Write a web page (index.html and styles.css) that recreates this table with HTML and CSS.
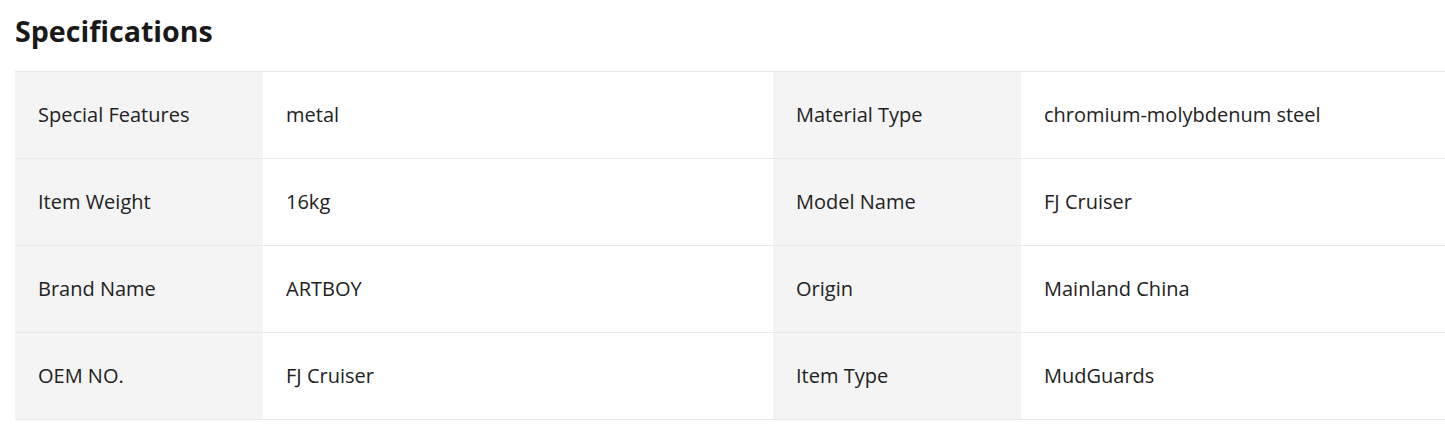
FILE: index.html
```html
<!DOCTYPE html>
<html lang="en">
<head>
    <meta charset="UTF-8">
    <meta name="viewport" content="width=device-width, initial-scale=1.0">
    <title>Specifications</title>
    <link rel="stylesheet" href="styles.css">
</head>
<body>
    <div class="specs">
        <h2 class="specs-title">Specifications</h2>
        <table class="specs-table">
            <colgroup>
                <col class="col-label">
                <col class="col-value">
                <col class="col-label">
                <col class="col-value-last">
            </colgroup>
            <tr>
                <td class="label">Special Features</td>
                <td>metal</td>
                <td class="label">Material Type</td>
                <td>chromium-molybdenum steel</td>
            </tr>
            <tr>
                <td class="label">Item Weight</td>
                <td>16kg</td>
                <td class="label">Model Name</td>
                <td>FJ Cruiser</td>
            </tr>
            <tr>
                <td class="label">Brand Name</td>
                <td>ARTBOY</td>
                <td class="label">Origin</td>
                <td>Mainland China</td>
            </tr>
            <tr>
                <td class="label">OEM NO.</td>
                <td>FJ Cruiser</td>
                <td class="label">Item Type</td>
                <td>MudGuards</td>
            </tr>
        </table>
    </div>
</body>
</html>
```

FILE: styles.css
```css
* {
    margin: 0;
    padding: 0;
    box-sizing: border-box;
}

body {
    background-color: #fff;
    font-family: "Open Sans", Arial, sans-serif;
    color: #222;
    overflow: hidden;
}

.specs {
    padding: 11px 0 0 15px;
}

.specs-title {
    font-size: 28.6px;
    font-weight: 700;
    line-height: 40px;
    color: #191919;
    margin-bottom: 20px;
}

.specs-table {
    width: 1430px;
    border-collapse: collapse;
    table-layout: fixed;
    border-top: 1px solid #e8e8e8;
}

.col-label {
    width: 248px;
}

.col-value {
    width: 510px;
}

.col-value-last {
    width: 424px;
}

.specs-table td {
    height: 87px;
    padding: 0 23px 2px;
    font-size: 20px;
    vertical-align: middle;
    border-bottom: 1px solid #e8e8e8;
    white-space: nowrap;
}

.specs-table td.label {
    background-color: #f4f4f4;
}
```
